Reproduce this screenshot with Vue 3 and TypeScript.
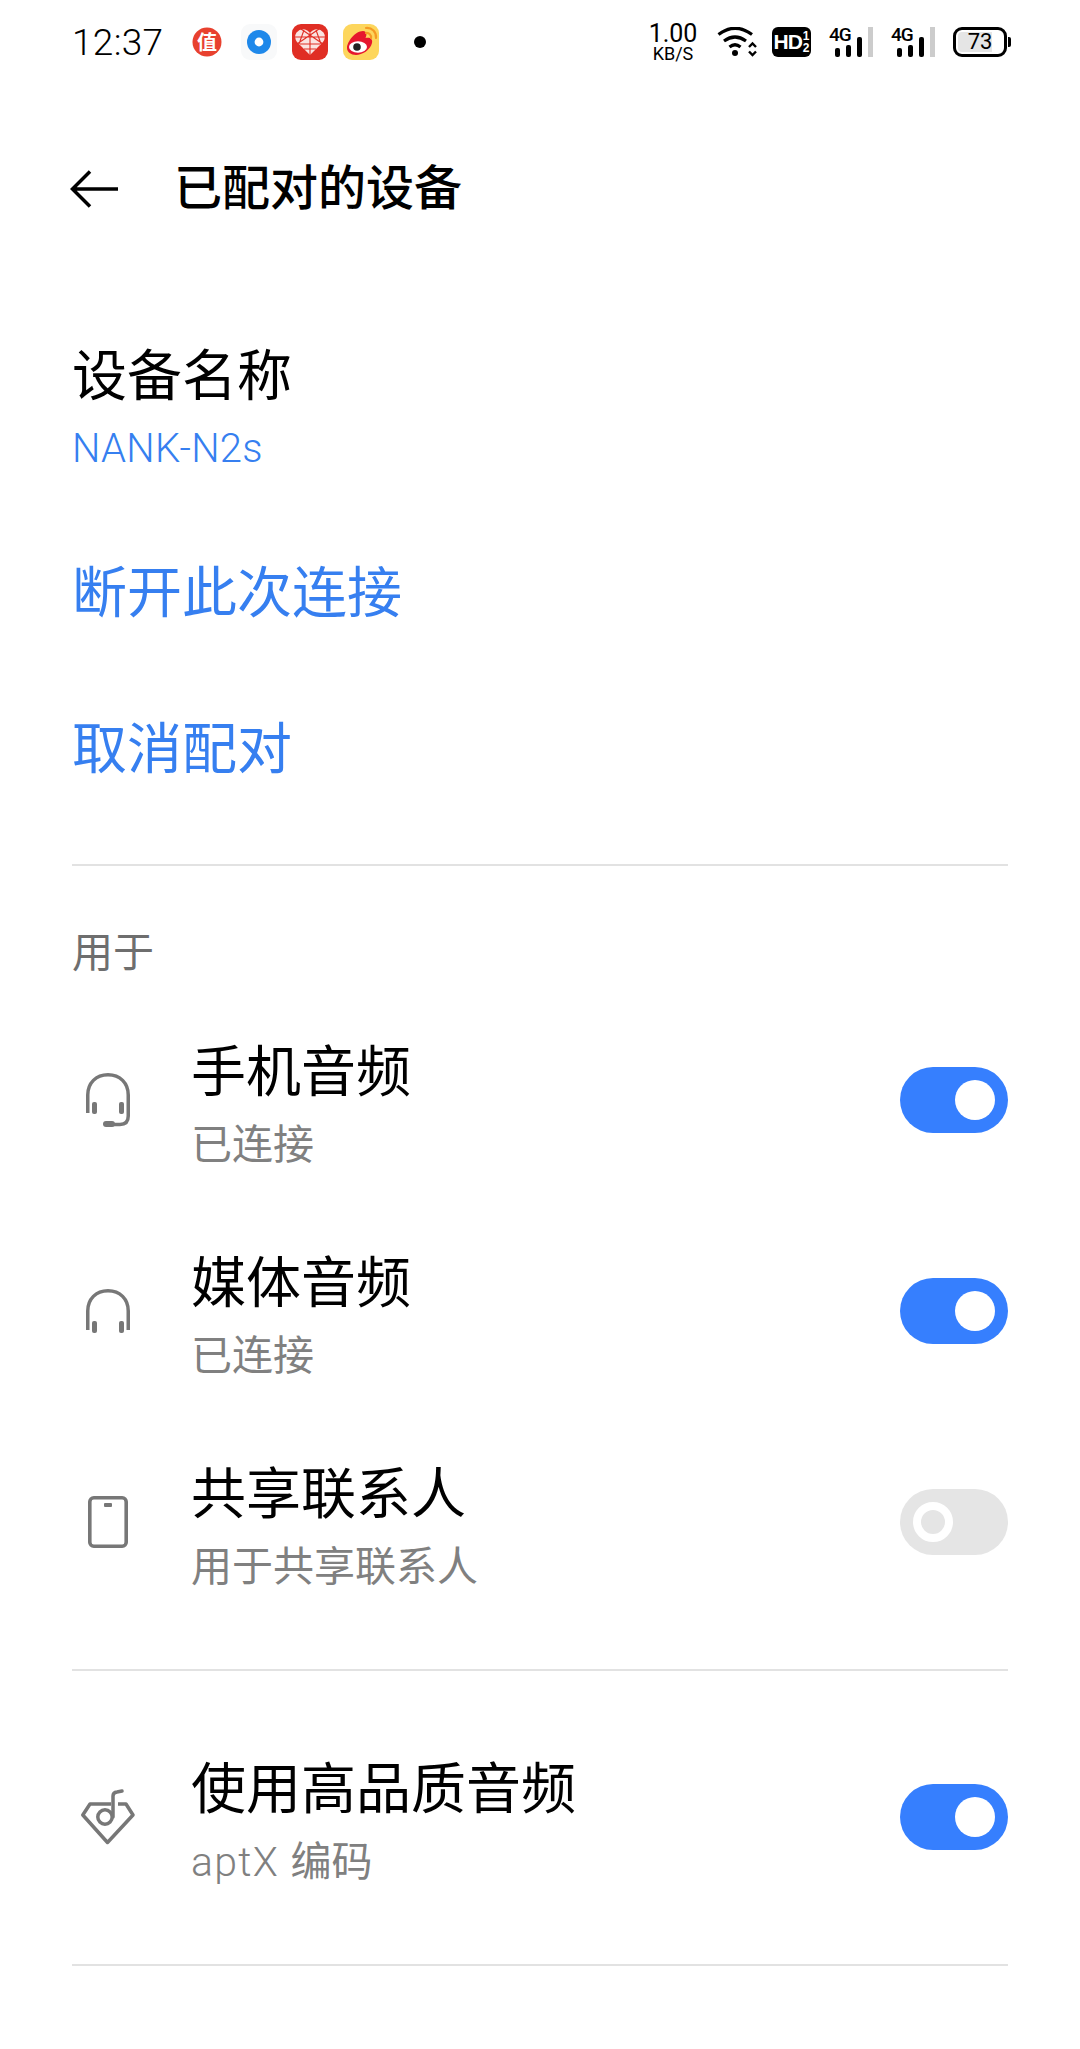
<script setup lang="ts">
interface Row { title: string; sub: string; icon: string; on: boolean }
const rows: Row[] = [
  { title: '手机音频', sub: '已连接', icon: 'headset', on: true },
  { title: '媒体音频', sub: '已连接', icon: 'headphones', on: true },
  { title: '共享联系人', sub: '用于共享联系人', icon: 'phone', on: false },
]
</script>

<template>
  <div class="page">
    <header class="status">
      <span class="time">12:37</span>
      <svg class="a1" viewBox="0 0 30 30" width="30" height="30"><circle cx="15" cy="15" r="14.5" fill="#e8412f"/><text x="15" y="22.5" text-anchor="middle" class="zhi">值</text></svg>
      <svg class="a2" viewBox="0 0 36 36" width="36" height="36"><rect width="36" height="36" rx="9" fill="#f8f9fa"/><circle cx="18" cy="18" r="12" fill="#1e88ea"/><circle cx="18" cy="18" r="4.4" fill="#fff"/></svg>
      <svg class="a3" viewBox="0 0 36 36" width="36" height="36"><rect width="36" height="36" rx="9" fill="#e02e24"/><path d="M18 31L5 18Q1.500 13 4.500 8.500Q8 4.500 13 5.500Q16 6 18 9Q20 6 23 5.500Q28 4.500 31.500 8.500Q34.500 13 31 18Z" fill="#fae3e0"/><path d="M18 9V31M9 5L31 20M27 5L5 20M3 13H33M8 20H28M12 25H24M12 6L7 20M24 6L29 20" stroke="#e02e24" stroke-width="1.100" fill="none"/></svg>
      <svg class="a4" viewBox="0 0 36 36" width="36" height="36"><rect width="36" height="36" rx="9" fill="#fdd65d"/><path d="M4 24C4 18 12 7 20 7C24 7 24 11 22.500 14C27 13 30 15 29 19C27.500 26 19 31 13 31C8 31 4 28 4 24Z" fill="#e6162d"/><ellipse cx="15" cy="23" rx="9" ry="5.800" fill="#fff"/><circle cx="14" cy="23" r="3.800" fill="#222"/><path d="M23 4C29 3.500 33.500 8 33 14M23 9C26 8.500 28.500 11 28 14" stroke="#f59a23" stroke-width="2.200" fill="none" stroke-linecap="round"/></svg>
      <span class="dot"></span>
      <div class="speed"><b>1.00</b><i>KB/S</i></div>
      <svg class="wifi" viewBox="0 0 40 30" width="40" height="30"><path d="M1.500 7.500Q18-5 35 7.500M7 14Q18 6 29 14M12.500 20Q18 15.500 23.500 20" stroke="#000" stroke-width="3.200" fill="none"/><circle cx="18" cy="26" r="3" fill="#000"/><path d="M32 20L35.500 16.500L39 20M32 24.500L35.500 28L39 24.500" stroke="#000" stroke-width="2.400" fill="none"/></svg>
      <div class="hd"><span class="hdt">HD</span><span class="hdn"><em>1</em><em>2</em></span></div>
      <div class="sig" v-for="n in 2" :key="n">
        <span class="g4">4G</span>
        <span class="bar b1"></span><span class="bar b2"></span><span class="bar b3"></span><span class="bar b4"></span>
      </div>
      <div class="batt"><div class="shell"><span class="fill"></span><span class="pct">73</span></div><span class="nub"></span></div>
    </header>

    <div class="nav">
      <svg viewBox="0 0 48 38" width="48" height="38"><path d="M48 19H3M20 1.500L2.500 19L20 36.500" stroke="#000" stroke-width="3.500" fill="none"/></svg>
      <h1>已配对的设备</h1>
    </div>

    <section class="top">
      <div class="name">设备名称</div>
      <div class="model">NANK-N2s</div>
      <div class="link first">断开此次连接</div>
      <div class="link second">取消配对</div>
    </section>

    <div class="rule r1"></div>
    <div class="label">用于</div>

    <div class="list">
      <div class="row" v-for="r in rows" :key="r.title">
        <div class="ico">
          <svg v-if="r.icon === 'headset'" viewBox="0 0 44 54" width="44" height="54"><path d="M1.750 40V22C1.750 10 10 1.750 22 1.750S42.250 10 42.250 22V43Q42.250 51.500 34 51.500H22" stroke="#777" stroke-width="3.500" fill="none"/><rect x="6" y="29" width="5" height="12" rx="2" fill="#777"/><rect x="33" y="29" width="5" height="12" rx="2" fill="#777"/><rect x="17" y="48" width="12" height="6" rx="3" fill="#777"/></svg>
          <svg v-else-if="r.icon === 'headphones'" viewBox="0 0 44 44" width="44" height="44"><path d="M1.750 41V22C1.750 10 10 1.750 22 1.750S42.250 10 42.250 22V41" stroke="#777" stroke-width="3.500" fill="none"/><rect x="6" y="32" width="5" height="12" rx="2" fill="#777"/><rect x="33" y="32" width="5" height="12" rx="2" fill="#777"/></svg>
          <svg v-else viewBox="0 0 40 52" width="40" height="52"><rect x="1.800" y="1.800" width="36.400" height="48.400" rx="4" stroke="#777" stroke-width="3.600" fill="none"/><rect x="16" y="7" width="8" height="4" rx="1" fill="#777"/></svg>
        </div>
        <div class="txt">
          <div class="t">{{ r.title }}</div>
          <div class="s">{{ r.sub }}</div>
        </div>
        <div class="sw" :class="{ on: r.on }"><span class="knob"></span></div>
      </div>
    </div>

    <div class="rule r2"></div>

    <div class="row hq">
      <div class="ico">
        <svg viewBox="0 0 54 56" width="54" height="56"><path d="M30 15H9L1.800 26L26.500 53.500L52 26L45 15H37" stroke="#777" stroke-width="3.500" fill="none" stroke-linejoin="round"/><circle cx="24" cy="28" r="7.200" stroke="#777" stroke-width="3.500" fill="none"/><path d="M32 28V7Q32 3.500 36 3L41 2" stroke="#777" stroke-width="3.500" fill="none" stroke-linecap="round"/></svg>
      </div>
      <div class="txt">
        <div class="t">使用高品质音频</div>
        <div class="s"><span class="latin">aptX </span>编码</div>
      </div>
      <div class="sw on"><span class="knob"></span></div>
    </div>

    <div class="rule r3"></div>
  </div>
</template>

<style>
html, body { margin: 0; background: #fff; }
</style>

<style scoped>
.page {
  width: 1080px;
  height: 2049px;
  background: #fff;
  overflow: hidden;
  font-family: Roboto, "Noto Sans CJK SC", sans-serif;
  color: #000;
}
.status {
  height: 84px;
  display: flex;
  align-items: center;
  padding: 0 69px 0 72px;
  box-sizing: border-box;
}
.status > * { flex: none; }
.time { font-size: 37px; font-weight: 300; line-height: 1; width: 120px; letter-spacing: 0.300px; }
.a2 { margin-left: 19px; }
.a3, .a4 { margin-left: 15px; }
.zhi { font: 700 20px "Noto Sans CJK SC", sans-serif; fill: #fff; }
.dot { width: 12px; height: 12px; border-radius: 50%; background: #000; margin-left: 35px; }
.speed { margin-left: auto; width: 48px; display: flex; flex-direction: column; align-items: center; }
.speed b { font-size: 25px; font-weight: 400; line-height: 22px; }
.speed i { font-size: 18px; font-style: normal; font-weight: 400; line-height: 17px; }
.wifi { margin-left: 20px; }
.hd { margin-left: 15px; width: 39px; height: 30px; background: #000; border-radius: 6px; color: #fff; display: flex; align-items: center; justify-content: center; font-family: "Liberation Sans", sans-serif; font-weight: 700; }
.hdt { font-size: 21px; letter-spacing: -1px; }
.hdn { display: flex; flex-direction: column; margin-left: 1px; }
.hdn em { font-style: normal; font-size: 12px; line-height: 12px; }
.sig { position: relative; margin-left: 18px; width: 44px; height: 30px; display: flex; align-items: flex-end; gap: 6px; }
.g4 { position: absolute; left: 0; top: 0; font-size: 19px; line-height: 16px; font-weight: 500; letter-spacing: -1px; }
.bar { width: 5px; background: #000; border-radius: 2px; }
.b1 { height: 9px; margin-left: 6px; }
.b2 { height: 12px; }
.b3 { height: 20px; }
.b4 { height: 30px; background: #ccc; border-radius: 0; }
.batt { margin-left: 18px; display: flex; align-items: center; gap: 1px; }
.shell { position: relative; width: 54px; height: 30px; box-sizing: border-box; border: 3px solid #000; border-radius: 9px; display: flex; align-items: center; justify-content: center; overflow: hidden; }
.fill { position: absolute; left: 2px; top: 2px; bottom: 2px; width: 34px; background: #e5e5e5; border-radius: 4px 0 0 4px; }
.pct { position: relative; font-size: 22px; font-weight: 400; line-height: 1; }
.nub { width: 3px; height: 10px; background: #000; border-radius: 0 2px 2px 0; }

.nav { display: flex; align-items: center; height: 56px; margin-top: 77px; padding-left: 70px; }
.nav svg { flex: none; }
.nav h1 { margin: 0 0 0 56px; font-size: 48px; line-height: 56px; font-weight: 500; }

.top { padding-left: 72px; }
.name { margin-top: 124px; font-size: 55px; line-height: 70px; font-weight: 400; }
.model { margin-top: 13px; font-size: 40px; line-height: 50px; font-weight: 300; letter-spacing: 0.300px; color: #367ff0; }
.link { height: 80px; font-size: 55px; line-height: 80px; color: #367ff0; }
.first { margin-top: 79px; }
.second { margin-top: 76px; }

.rule { height: 2px; margin: 0 72px; background: #e2e2e2; }
.r1 { margin-top: 75px; }
.label { margin: 62px 0 0 72px; height: 50px; font-size: 41px; line-height: 50px; color: #6e6e6e; }
.list { margin-top: 16px; }
.row { height: 211px; display: flex; align-items: center; padding: 0 72px; }
.ico { flex: none; width: 72px; margin-right: 47px; display: flex; align-items: center; justify-content: center; }
.txt { flex: 1; padding-top: 7px; }
.t { font-size: 55px; line-height: 70px; }
.s { margin-top: 13px; font-size: 41px; line-height: 50px; color: #808080; font-weight: 400; }
.latin { letter-spacing: 1.300px; font-weight: 300; }
.sw { flex: none; width: 108px; height: 66px; border-radius: 33px; background: #e5e5e5; display: flex; align-items: center; padding: 0 13px; box-sizing: border-box; }
.sw.on { background: #367ffe; justify-content: flex-end; }
.knob { width: 40px; height: 40px; border-radius: 50%; box-sizing: border-box; border: 8px solid #fff; }
.sw.on .knob { background: #fff; border: 0; }
.r2 { margin-top: 42px; }
.hq { margin-top: 40px; }
.r3 { margin-top: 42px; }
</style>
